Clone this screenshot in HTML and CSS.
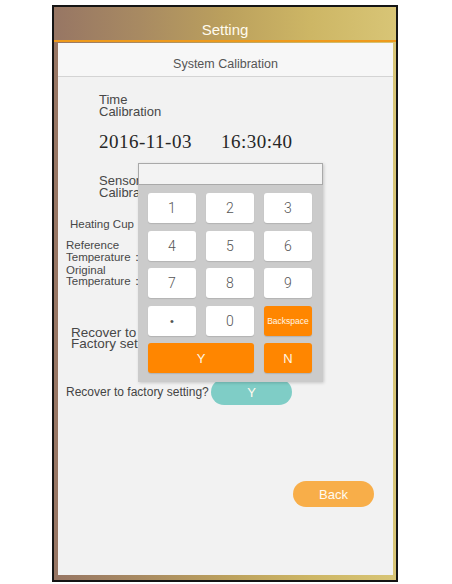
FILE: index.html
```html
<!DOCTYPE html>
<html>
<head>
<meta charset="utf-8">
<link rel="stylesheet" href="styles.css">
</head>
<body>
<div class="device">
  <header class="topbar">Setting</header>
  <main class="panel">
    <div class="section-title">System Calibration</div>
    <div class="label label-time"><div>Time</div><div>Calibration</div></div>
    <div class="datetime"><span class="date">2016-11-03</span><span class="time">16:30:40</span></div>
    <div class="label label-sensor"><div>Sensor</div><div>Calibration</div></div>
    <div class="small small-heating">Heating Cup</div>
    <div class="small small-ref"><div>Reference</div><div>Temperature：</div></div>
    <div class="small small-orig"><div>Original</div><div>Temperature：</div></div>
    <div class="label label-recover"><div>Recover to</div><div>Factory setting</div></div>
    <div class="confirm-row">
      <span class="confirm-text">Recover to factory setting?</span>
      <button class="pill pill-teal">Y</button>
    </div>
    <div class="back-row">
      <button class="pill pill-back">Back</button>
    </div>

    <div class="numpad">
      <div class="numpad-input"></div>
      <div class="numpad-keys">
        <div class="key">1</div>
        <div class="key">2</div>
        <div class="key">3</div>
        <div class="key">4</div>
        <div class="key">5</div>
        <div class="key">6</div>
        <div class="key">7</div>
        <div class="key">8</div>
        <div class="key">9</div>
        <div class="key key-dot">•</div>
        <div class="key">0</div>
        <div class="key key-orange key-back">Backspace</div>
        <div class="key key-orange key-wide">Y</div>
        <div class="key key-orange">N</div>
      </div>
    </div>
  </main>
</div>
</body>
</html>
```

FILE: styles.css
```css
* { box-sizing: border-box; }

html, body {
  margin: 0;
  padding: 0;
  background: #ffffff;
  font-family: "Liberation Sans", Arial, sans-serif;
}

.device {
  margin: 5px 0 0 52px;
  width: 346px;
  height: 577px;
  border: 2px solid #151515;
  background: linear-gradient(90deg, #977664 0%, #a88a62 25%, #bba05d 50%, #cdb665 75%, #d8c576 100%);
  display: flex;
  flex-direction: column;
  padding: 0 3px 5px 4px;
}

.topbar {
  height: 35px;
  margin: 0 -3px 1px -4px;
  border-bottom: 2px solid #ee9a1c;
  color: #fffbef;
  font-size: 15px;
  line-height: 18px;
  padding-top: 14px;
  text-align: center;
}

.panel {
  flex: 1;
  background: #f2f2f2;
  position: relative;
  color: #474747;
}

.section-title {
  height: 34px;
  background: #f7f7f7;
  border-bottom: 1px solid #d4d4d4;
  font-size: 12.5px;
  line-height: 15px;
  padding-top: 14px;
  text-align: center;
  color: #555;
}

.label {
  font-size: 13px;
  line-height: 12px;
}

.label > div {
  height: 12px;
}

.label-time {
  margin-top: 17px;
  padding-left: 41px;
}

.datetime {
  margin-top: 14px;
  padding-left: 41px;
  font-family: "Liberation Serif", "Times New Roman", serif;
  font-size: 19px;
  line-height: 20px;
  letter-spacing: 0.5px;
  color: #262626;
}

.date {
  display: inline-block;
  width: 122px;
}

.label-sensor {
  margin-top: 23px;
  padding-left: 41px;
}

.small {
  font-size: 11.5px;
  line-height: 11.5px;
}

.small > div {
  height: 11.5px;
}

.small-heating {
  margin-top: 19px;
  padding-left: 12px;
  line-height: 12px;
}

.small-ref {
  margin-top: 10px;
  padding-left: 8px;
}

.small-orig {
  margin-top: 1.5px;
  padding-left: 8px;
}

.label-recover {
  margin-top: 39px;
  padding-left: 13px;
  font-size: 13.5px;
  line-height: 11px;
}

.label-recover > div {
  height: 11px;
}

.confirm-row {
  margin-top: 30.5px;
  padding-left: 8px;
  display: flex;
  align-items: center;
  height: 26px;
}

.confirm-text {
  width: 145px;
  font-size: 12px;
  color: #444;
}

.pill {
  border: none;
  border-radius: 13px;
  height: 26px;
  width: 81px;
  color: #fffaf0;
  font-family: "Liberation Sans", Arial, sans-serif;
  font-size: 13px;
  padding: 0;
}

.pill-teal {
  background: #7fcdc6;
}

.back-row {
  margin-top: 76px;
  display: flex;
  justify-content: flex-end;
  padding-right: 19px;
}

.pill-back {
  background: #f8ae49;
}

/* numeric keypad overlay */
.numpad {
  position: absolute;
  left: 80px;
  top: 120px;
  width: 185px;
  box-shadow: 1px 1px 3px rgba(0, 0, 0, 0.18);
}

.numpad-input {
  height: 22px;
  background: #f3f3f3;
  border: 1px solid #a9a9a9;
}

.numpad-keys {
  background: #cbcbcb;
  padding: 8px 11px 9px 10px;
  display: grid;
  grid-template-columns: repeat(3, 48px);
  grid-auto-rows: 30px;
  column-gap: 10px;
  row-gap: 7.5px;
}

.key {
  background: #ffffff;
  border-radius: 3px;
  box-shadow: 0 1px 1px rgba(0, 0, 0, 0.12);
  display: flex;
  align-items: center;
  justify-content: center;
  font-family: Roboto, "Liberation Sans", sans-serif;
  font-weight: 300;
  font-size: 14px;
  color: #555;
}

.key-dot {
  font-family: "Liberation Sans", Arial, sans-serif;
  font-size: 11px;
  font-weight: 400;
  color: #555;
}

.key-orange {
  background: #ff8600;
  color: #fff6e6;
  font-family: "Liberation Sans", Arial, sans-serif;
  font-weight: 400;
  font-size: 13px;
}

.key-back {
  font-size: 8.5px;
}

.key-wide {
  grid-column: span 2;
}
```
